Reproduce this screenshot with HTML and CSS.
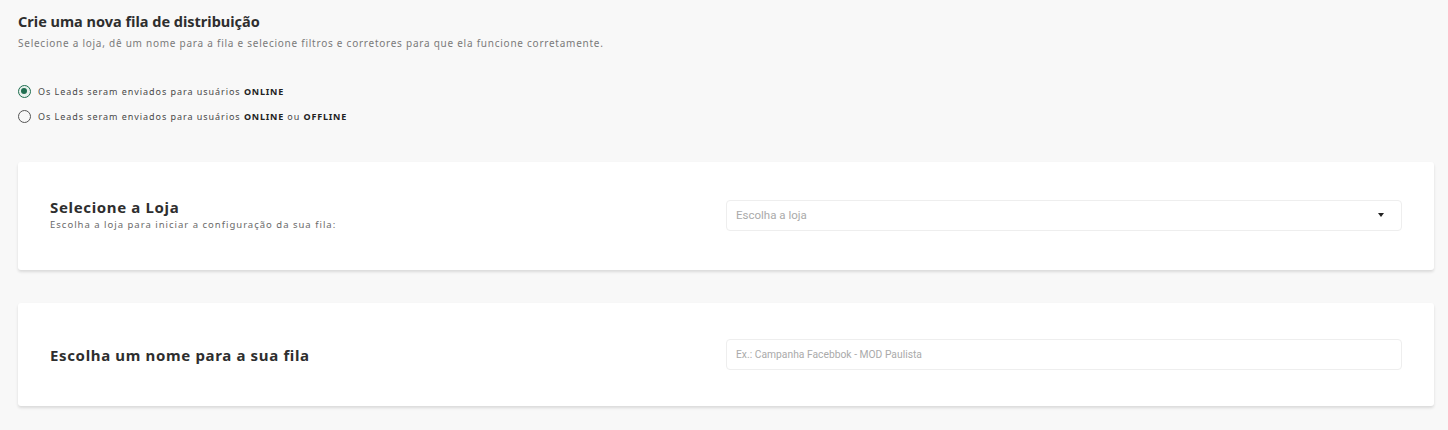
FILE: index.html
```html
<!DOCTYPE html>
<html lang="pt-BR">
<head>
    <meta charset="UTF-8">
    <meta name="viewport" content="width=device-width, initial-scale=1.0">
    <title>Nova fila de distribuição</title>
    <link rel="stylesheet" href="styles.css">
</head>
<body>
    <div class="page">
        <div class="page-header">
            <h1>Crie uma nova fila de distribuição</h1>
            <p>Selecione a loja, dê um nome para a fila e selecione filtros e corretores para que ela funcione corretamente.</p>
        </div>

        <div class="radio-group">
            <label class="radio-option">
                <input type="radio" name="mode" checked>
                <span class="radio-mark"></span>
                <span>Os Leads seram enviados para usuários <b>ONLINE</b></span>
            </label>
            <label class="radio-option">
                <input type="radio" name="mode">
                <span class="radio-mark"></span>
                <span>Os Leads seram enviados para usuários <b>ONLINE</b> ou <b>OFFLINE</b></span>
            </label>
        </div>

        <div class="card card-store">
            <div class="card-text">
                <h2>Selecione a Loja</h2>
                <p>Escolha a loja para iniciar a configuração da sua fila:</p>
            </div>
            <div class="field select-field">
                <span class="placeholder">Escolha a loja</span>
                <svg class="caret" width="6" height="4" viewBox="0 0 6 4"><path d="M0 0h6L3 4z" fill="#222"/></svg>
            </div>
        </div>

        <div class="card card-name">
            <div class="card-text">
                <h2>Escolha um nome para a sua fila</h2>
            </div>
            <input class="field name-input" type="text" placeholder="Ex.: Campanha Facebbok - MOD Paulista">
        </div>
    </div>
</body>
</html>
```

FILE: styles.css
```css
body {
    margin: 0;
    background-color: #f8f8f8;
    font-family: "Noto Sans", Arial, sans-serif;
    color: #333;
}
.page {
    padding: 12px 14px 12px 18px;
}
.page-header h1 {
    margin: 0;
    font-size: 14.5px;
    line-height: 18px;
    font-weight: 700;
    color: #2e2e2e;
}
.page-header p {
    margin: 7px 0 0;
    font-size: 10px;
    line-height: 12px;
    letter-spacing: 0.75px;
    color: #7a7a7a;
}
.radio-group {
    display: flex;
    flex-direction: column;
    gap: 11px;
    margin-top: 35px;
}
.radio-option {
    display: flex;
    align-items: center;
    gap: 7px;
    height: 14px;
    font-size: 9px;
    letter-spacing: 0.95px;
    color: #484848;
    cursor: pointer;
}
.radio-option b {
    color: #222;
    letter-spacing: 0.8px;
}
.radio-option input {
    display: none;
}
.radio-mark {
    box-sizing: border-box;
    width: 13px;
    height: 13px;
    border: 1.5px solid #555;
    border-radius: 50%;
    position: relative;
}
.radio-option input:checked + .radio-mark {
    border-color: #1f6e50;
    background: #e7f0ec;
}
.radio-option input:checked + .radio-mark::after {
    content: "";
    position: absolute;
    left: 2px;
    top: 2px;
    width: 6px;
    height: 6px;
    border-radius: 50%;
    background: #1f6e50;
}
.card {
    display: grid;
    grid-template-columns: 1fr 1fr;
    align-items: center;
    background: #fff;
    border-radius: 3px;
    box-shadow: 0 2px 3px rgba(0,0,0,0.12);
}
.card-store {
    margin-top: 39px;
    padding: 35px 32px 37px;
}
.card-name {
    margin-top: 33px;
    padding: 36px 32px;
}
.card-text h2 {
    margin: 0;
    font-size: 15px;
    line-height: 20px;
    letter-spacing: 0.65px;
    font-weight: 700;
    color: #2e2e2e;
}
.card-text p {
    margin: 0;
    font-size: 9.5px;
    line-height: 16px;
    letter-spacing: 1px;
    color: #6a6a6a;
}
.field {
    box-sizing: border-box;
    height: 31px;
    border: 1px solid #eee;
    border-radius: 4px;
    background: #fff;
    padding: 0 9px;
    font-family: Roboto, Arial, sans-serif;
    font-size: 11.5px;
    color: #555;
    outline: none;
}
.name-input {
    font-size: 10.3px;
}
.field::placeholder {
    color: #aaa;
}
.select-field {
    display: flex;
    align-items: center;
    justify-content: space-between;
    padding-right: 17px;
}
.placeholder {
    color: #aaa;
}
.caret {
    display: block;
}
```
